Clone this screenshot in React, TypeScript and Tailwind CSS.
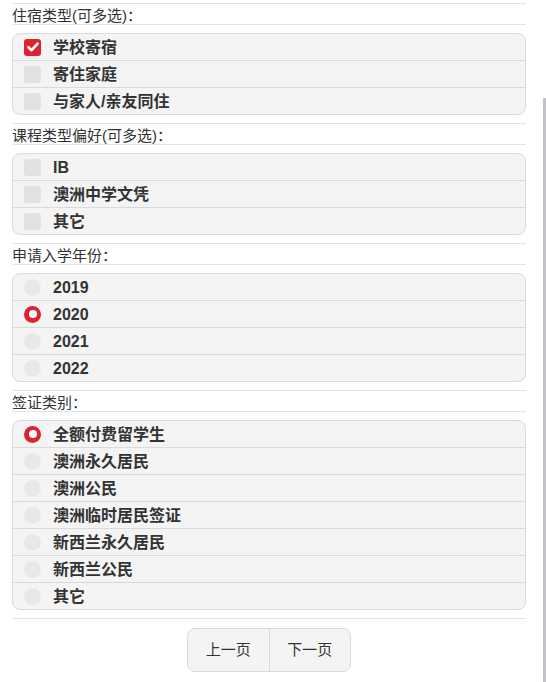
import React from "react";

type Option = { label: string; checked?: boolean };

interface SectionProps {
  title: string;
  type: "checkbox" | "radio";
  options: Option[];
}

function CheckIcon({ checked }: { checked?: boolean }) {
  if (!checked) {
    return <span className="h-[17px] w-[17px] shrink-0 rounded-[3px] bg-[#e2e2e2]" />;
  }
  return (
    <span className="flex h-[17px] w-[17px] shrink-0 items-center justify-center rounded-[3px] bg-[#dc2530]">
      <svg width="12" height="10" viewBox="0 0 12 10">
        <path d="M1.5 5.2 L4.6 8.2 L10.6 1.6" fill="none" stroke="#fff" strokeWidth="2.6" strokeLinecap="round" strokeLinejoin="round" />
      </svg>
    </span>
  );
}

function RadioIcon({ checked }: { checked?: boolean }) {
  if (!checked) {
    return <span className="h-[17px] w-[17px] shrink-0 rounded-full bg-[#e8e8e8]" />;
  }
  return (
    <span className="flex h-[17px] w-[17px] shrink-0 items-center justify-center rounded-full bg-[#dc2530]">
      <span className="h-[8px] w-[8px] rounded-full bg-white" />
    </span>
  );
}

function Section({ title, type, options }: SectionProps) {
  return (
    <div className="pb-[8px]">
      <div className="flex h-[22px] items-center border-y border-[#e3e3e3] pt-[2px] text-[15px] leading-none text-[#333]">
        {title}
      </div>
      <div className="mt-[8px] overflow-hidden rounded-[8px] border border-[#dadada] bg-[#f4f4f4]">
        {options.map((o, i) => (
          <div
            key={o.label}
            className={
              "flex h-[26px] items-center gap-[12px] pl-[11px] " +
              (i > 0 ? "box-content border-t border-[#dadada]" : "")
            }
          >
            {type === "checkbox" ? <CheckIcon checked={o.checked} /> : <RadioIcon checked={o.checked} />}
            <span className="pt-[2px] text-[16px] leading-none font-bold text-[#333]">{o.label}</span>
          </div>
        ))}
      </div>
    </div>
  );
}

export default function App() {
  return (
    <div
      className="relative h-[682px] w-[546px] overflow-hidden bg-white"
      style={{ fontFamily: '"Liberation Sans", "Noto Sans CJK SC", sans-serif' }}
    >
      <div className="ml-[12px] w-[514px] pt-[3px]">
        <Section
          title="住宿类型(可多选)："
          type="checkbox"
          options={[{ label: "学校寄宿", checked: true }, { label: "寄住家庭" }, { label: "与家人/亲友同住" }]}
        />
        <Section
          title="课程类型偏好(可多选)："
          type="checkbox"
          options={[{ label: "IB" }, { label: "澳洲中学文凭" }, { label: "其它" }]}
        />
        <Section
          title="申请入学年份："
          type="radio"
          options={[{ label: "2019" }, { label: "2020", checked: true }, { label: "2021" }, { label: "2022" }]}
        />
        <Section
          title="签证类别："
          type="radio"
          options={[
            { label: "全额付费留学生", checked: true },
            { label: "澳洲永久居民" },
            { label: "澳洲公民" },
            { label: "澳洲临时居民签证" },
            { label: "新西兰永久居民" },
            { label: "新西兰公民" },
            { label: "其它" },
          ]}
        />
        <div className="border-t border-[#e3e3e3] pt-[9px]">
          <div className="mx-auto flex h-[44px] w-[164px] overflow-hidden rounded-[8px] border border-[#dadada] bg-[#f4f4f4] text-[15px] text-[#333]">
            <button className="flex flex-1 items-center justify-center">上一页</button>
            <button className="flex flex-1 items-center justify-center border-l border-[#dadada]">下一页</button>
          </div>
        </div>
      </div>
      <div className="absolute right-0 top-[98px] h-[584px] w-[3px] bg-[#c3c3c7]" />
    </div>
  );
}
